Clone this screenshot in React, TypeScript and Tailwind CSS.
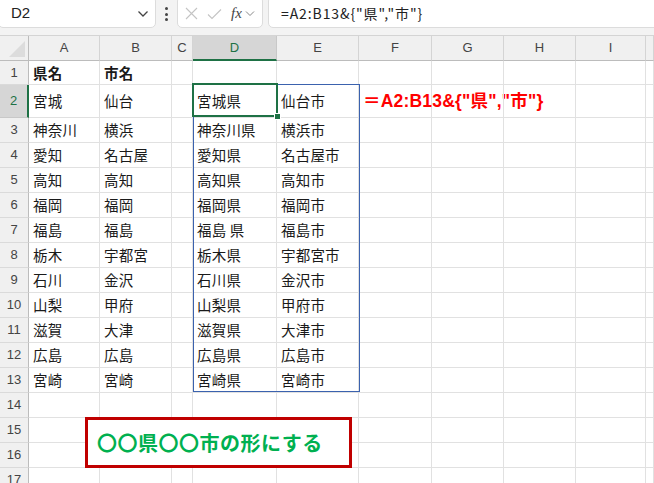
import React from 'react';

const cols = ['A', 'B', 'C', 'D', 'E', 'F', 'G', 'H', 'I', ''];
const prefs = ['宮城', '神奈川', '愛知', '高知', '福岡', '福島', '栃木', '石川', '山梨', '滋賀', '広島', '宮崎'];
const cities = ['仙台', '横浜', '名古屋', '高知', '福岡', '福島', '宇都宮', '金沢', '甲府', '大津', '広島', '宮崎'];

const jp = "font-['Noto_Sans_CJK_JP','Noto_Sans',sans-serif]";

function cellText(row: number, col: number): React.ReactNode {
  if (row === 1) {
    if (col === 0) return <span className="font-bold">県名</span>;
    if (col === 1) return <span className="font-bold">市名</span>;
    return null;
  }
  const i = row - 2;
  if (i < 0 || i > 11) return null;
  if (col === 0) return prefs[i];
  if (col === 1) return cities[i];
  if (col === 3) return prefs[i] === '福島' ? '福島 県' : prefs[i] + '県';
  if (col === 4) return cities[i] + '市';
  if (col === 5 && row === 2)
    return (
      <span className="whitespace-nowrap text-[17.5px] font-bold text-[#ff0000] tracking-[0.2px] font-['Liberation_Sans','Noto_Sans_CJK_JP',sans-serif]">
        ＝A2:B13&amp;{'{'}"県","市"{'}'}
      </span>
    );
  return null;
}

export default function App() {
  const rows = Array.from({ length: 17 }, (_, i) => i + 1);
  return (
    <div className={`w-[654px] h-[483px] overflow-hidden bg-white ${jp}`}>
      {/* formula bar */}
      <div className="h-[35px] bg-[#f3f3f3] flex items-start relative">
        <div className="absolute left-[-2px] top-[-4px] w-[158px] h-[32px] bg-white border border-[#dcdcdc] rounded-[5px] flex items-center justify-between pl-[12px] pr-[6px] pt-[3px]">
          <span className="text-[15px] text-[#222] font-['Liberation_Sans',sans-serif]">D2</span>
          <svg width="12" height="8" viewBox="0 0 12 8">
            <path d="M1.5 1.5 L6 6 L10.5 1.5" fill="none" stroke="#444" strokeWidth="1.3" />
          </svg>
        </div>
        <div className="absolute left-[165px] top-[7px] flex flex-col gap-[2.5px]">
          <span className="w-[3px] h-[3px] rounded-full bg-[#444]" />
          <span className="w-[3px] h-[3px] rounded-full bg-[#444]" />
          <span className="w-[3px] h-[3px] rounded-full bg-[#444]" />
        </div>
        <div className="absolute left-[177px] top-[-4px] w-[86px] h-[32px] bg-white border border-[#dcdcdc] rounded-[5px] flex items-center pl-[7px] pt-[3px] gap-[9px]">
          <svg width="13" height="13" viewBox="0 0 13 13">
            <path d="M1 1 L12 12 M12 1 L1 12" stroke="#c4c4c4" strokeWidth="1.1" />
          </svg>
          <svg width="15" height="12" viewBox="0 0 15 12">
            <path d="M1 6.5 L5 10.5 L14 1.5" fill="none" stroke="#c4c4c4" strokeWidth="1.1" />
          </svg>
          <span className="italic text-[15px] text-[#444] font-['Liberation_Serif',serif] leading-none">
            fx
          </span>
          <svg width="10" height="7" viewBox="0 0 10 7" className="-ml-[6px]">
            <path d="M1 1.5 L5 5.5 L9 1.5" fill="none" stroke="#888" strokeWidth="1" />
          </svg>
        </div>
        <div className="absolute left-[268px] top-[-4px] w-[400px] h-[32px] bg-white border border-[#dcdcdc] rounded-[5px] flex items-center pl-[12px] pt-[3px]">
          <span className="text-[14px] text-[#222] whitespace-nowrap tracking-[0.9px]">
            =A2:B13&amp;{'{'}"県","市"{'}'}
          </span>
        </div>
      </div>

      {/* sheet */}
      <div className="relative">
        <div className="grid grid-cols-[29px_71px_72px_21px_84px_82px_73px_72px_72px_70px_1fr] grid-rows-[25px_24px_33px_repeat(15,25px)] border-t border-[#d4d4d4]">
          {/* corner */}
          <div className="bg-[#f0f0f0] border-r border-b border-[#bcbcbc] relative">
            <div className="absolute right-[3px] bottom-[3px] w-0 h-0 border-l-[16px] border-l-transparent border-b-[16px] border-b-[#dcdcdc]" />
          </div>
          {cols.map((c, ci) =>
            ci === 3 ? (
              <div
                key={c}
                className="bg-[#d6d6d6] border-b-2 border-b-[#1e7145] border-r border-r-[#c8c8c8] flex items-center justify-center text-[13px] text-[#1e7145] font-['Liberation_Sans',sans-serif]"
              >
                {c}
              </div>
            ) : (
              <div
                key={ci}
                className="bg-[#f0f0f0] border-b border-b-[#bcbcbc] border-r border-r-[#d4d4d4] flex items-center justify-center text-[13px] text-[#444] font-['Liberation_Sans',sans-serif]"
              >
                {c}
              </div>
            )
          )}
          {rows.map((r) => (
            <React.Fragment key={r}>
              {r === 2 ? (
                <div className="bg-[#d6d6d6] border-r-2 border-r-[#1e7145] border-b border-b-[#c8c8c8] flex items-center justify-center text-[13px] text-[#1e7145] font-['Liberation_Sans',sans-serif]">
                  {r}
                </div>
              ) : (
                <div className="bg-[#f0f0f0] border-r border-r-[#bcbcbc] border-b border-b-[#dadada] flex items-center justify-center text-[13px] text-[#444] font-['Liberation_Sans',sans-serif]">
                  {r}
                </div>
              )}
              {cols.map((_, ci) => (
                <div
                  key={ci}
                  className="border-r border-b border-[#e1e1e1] flex items-center pl-[4px] text-[14.5px] text-[#1a1a1a] tracking-[0.2px] overflow-visible whitespace-nowrap"
                >
                  {cellText(r, ci)}
                </div>
              ))}
            </React.Fragment>
          ))}
        </div>

        {/* spill range */}
        <div className="absolute left-[193px] top-[49px] w-[167px] h-[308px] border border-[#3b62ae] pointer-events-none" />
        {/* active cell */}
        <div className="absolute left-[192px] top-[48px] w-[86px] h-[34px] border-2 border-[#1e7145] pointer-events-none">
          <div className="absolute right-[-5px] bottom-[-5px] w-[7px] h-[7px] bg-[#1e7145] border border-white" />
        </div>

        {/* text box */}
        <div className="absolute left-[85px] top-[382px] w-[267px] h-[51px] bg-white border-[3px] border-[#c00000] flex items-center pl-[9px]">
          <span className="text-[20px] font-bold text-[#00b050] tracking-[0.5px] whitespace-nowrap">
            〇〇県〇〇市の形にする
          </span>
        </div>
      </div>
    </div>
  );
}
